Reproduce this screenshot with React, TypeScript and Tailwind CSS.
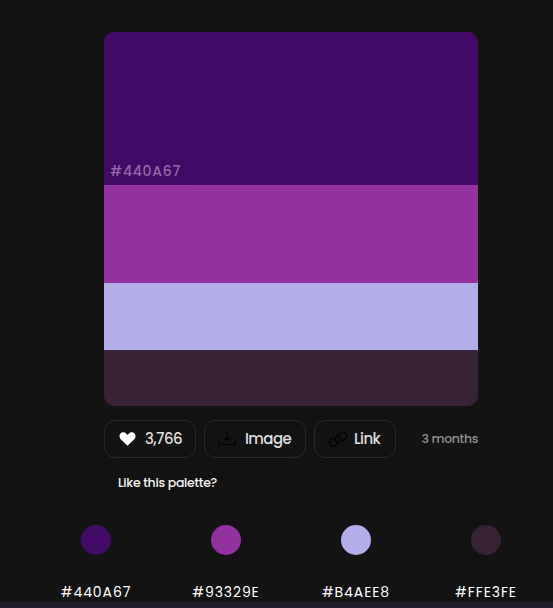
const swatches = [
  { label: '#440A67', fill: 'bg-[#440a67]' },
  { label: '#93329E', fill: 'bg-[#93329e]' },
  { label: '#B4AEE8', fill: 'bg-[#b4aee8]' },
  { label: '#FFE3FE', fill: 'bg-[#382236]' },
];

const button =
  'flex h-[38px] items-center rounded-[11px] border border-[#292929] pl-[13px] text-[15px] font-medium tracking-[-0.6px] text-[#dfdfdf]';

function Heart() {
  return (
    <svg className="ml-px h-[14px] w-[17px] shrink-0" viewBox="0 0 18 14" preserveAspectRatio="none" fill="white">
      <path d="M9 13.8 1.8 7.3C.2 5.8.1 3.4 1.5 1.6 3.1-.1 5.9-.2 7.5 1.5L9 3.1l1.5-1.6c1.6-1.7 4.4-1.6 6 .1 1.4 1.8 1.3 4.2-.3 5.7Z" />
    </svg>
  );
}

function Download() {
  return (
    <svg className="h-[18px] w-[18px] shrink-0" viewBox="0 0 18 18" fill="none" stroke="#000" strokeWidth="1.1" strokeLinecap="round" strokeLinejoin="round">
      <path d="M9 1.5v9M5.4 7.2 9 10.7l3.6-3.5M.8 11v1.8c0 1 .7 1.7 1.7 1.7h13c1 0 1.7-.7 1.7-1.7V11" />
    </svg>
  );
}

function Chain() {
  return (
    <svg className="h-[18px] w-[20px] shrink-0" viewBox="0 0 20 18" fill="none" stroke="#000" strokeWidth="1.2" strokeLinecap="round">
      <path d="M8.8 12.1C7 11 6.8 8.7 8.2 7.2l3.6-3.7c1.5-1.5 3.9-1.8 5.5-.5 1.7 1.4 1.8 3.9.3 5.5L14.9 11" />
      <path d="M11 6.5c1.8 1.1 2.1 3.4.6 4.9L8 15c-1.5 1.4-3.9 1.6-5.4.3-1.6-1.4-1.7-3.8-.2-5.4L5.1 7.2" />
    </svg>
  );
}

export default function App() {
  return (
    <main className="flex h-[608px] w-[553px] flex-col overflow-hidden bg-[#131313] pt-8 font-['Poppins','Inter',sans-serif] text-white">
      <section className="ml-[104px] flex h-[374px] w-[374px] shrink-0 flex-col overflow-hidden rounded-[10px]">
        <div className="flex h-[153px] items-end bg-[#440a67]">
          <span className="flex h-[27px] w-[84px] items-center bg-[#420a64] pl-[6px] text-[14px] font-medium tracking-[0.75px] text-[#9468a8]">
            #440A67
          </span>
        </div>
        <div className="h-[98px] bg-[#93329e]" />
        <div className="h-[67px] bg-[#b4aee8]" />
        <div className="h-[56px] bg-[#382236]" />
      </section>

      <div className="ml-[104px] mt-[14px] flex w-[374px] shrink-0 items-center gap-2">
        <button className={`${button} w-[92px] gap-[9px]`}>
          <Heart />
          <span>3,766</span>
        </button>
        <button className={`${button} w-[102px] gap-[9px]`}>
          <Download />
          <span>Image</span>
        </button>
        <button className={`${button} w-[82px] gap-[6px]`}>
          <Chain />
          <span>Link</span>
        </button>
        <span className="ml-auto whitespace-nowrap text-[12.5px] font-medium tracking-[-0.35px] text-[#929292]">3 months</span>
      </div>

      <div className="ml-[104px] mt-[12px] flex h-[26px] w-[127px] shrink-0 items-center rounded-[4px] bg-[#121212] pl-[14px] text-[12.5px] font-medium tracking-[-0.3px] whitespace-nowrap text-[#f5f5f5]">
        Like this palette?
      </div>

      <section className="ml-[31px] mt-[29px] grid w-[520px] shrink-0 grid-cols-4">
        {swatches.map((swatch) => (
          <div key={swatch.label} className="flex flex-col items-center">
            <div className={`size-[30px] rounded-full ${swatch.fill}`} />
            <span className="mt-[27px] text-[14px] leading-5 tracking-[0.9px] text-white">{swatch.label}</span>
          </div>
        ))}
      </section>
      <div className="h-[6px] w-full shrink-0 bg-[#1e1d28]" />
    </main>
  );
}
